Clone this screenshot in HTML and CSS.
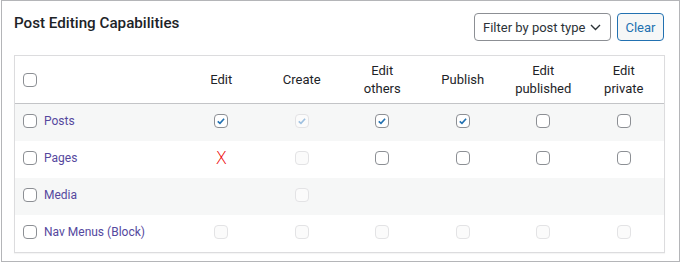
FILE: index.html
```html
<!DOCTYPE html>
<html>
<head>
<meta charset="utf-8">
<link rel="stylesheet" href="styles.css">
</head>
<body>
<div class="frame">
  <div class="topbar">
    <h2 class="title">Post Editing Capabilities</h2>
    <div class="controls">
      <div class="select">
        <span>Filter by post type</span>
        <svg class="chev" width="11" height="7" viewBox="0 0 11 7"><path d="M1 1 L5.5 5.5 L10 1" fill="none" stroke="#2c3338" stroke-width="1.4"/></svg>
      </div>
      <button class="btn">Clear</button>
    </div>
  </div>
  <div class="table">
    <div class="row head">
      <div class="first"><span class="cb"></span></div>
      <div class="cell">Edit</div>
      <div class="cell">Create</div>
      <div class="cell">Edit<br>others</div>
      <div class="cell">Publish</div>
      <div class="cell">Edit<br>published</div>
      <div class="cell">Edit<br>private</div>
    </div>
    <div class="row alt">
      <div class="first"><span class="cb"></span><a class="label">Posts</a></div>
      <div class="cell"><span class="cb on"><svg viewBox="0 0 14 14"><path d="M3.2 7.4 L5.8 9.8 L10.6 4.4" fill="none" stroke-width="1.9"/></svg></span></div>
      <div class="cell"><span class="cb dis on"><svg viewBox="0 0 14 14"><path d="M3.2 7.4 L5.8 9.8 L10.6 4.4" fill="none" stroke-width="1.9"/></svg></span></div>
      <div class="cell"><span class="cb on"><svg viewBox="0 0 14 14"><path d="M3.2 7.4 L5.8 9.8 L10.6 4.4" fill="none" stroke-width="1.9"/></svg></span></div>
      <div class="cell"><span class="cb on"><svg viewBox="0 0 14 14"><path d="M3.2 7.4 L5.8 9.8 L10.6 4.4" fill="none" stroke-width="1.9"/></svg></span></div>
      <div class="cell"><span class="cb"></span></div>
      <div class="cell"><span class="cb"></span></div>
    </div>
    <div class="row">
      <div class="first"><span class="cb"></span><a class="label">Pages</a></div>
      <div class="cell"><span class="no">X</span></div>
      <div class="cell"><span class="cb dis"></span></div>
      <div class="cell"><span class="cb"></span></div>
      <div class="cell"><span class="cb"></span></div>
      <div class="cell"><span class="cb"></span></div>
      <div class="cell"><span class="cb"></span></div>
    </div>
    <div class="row alt">
      <div class="first"><span class="cb"></span><a class="label">Media</a></div>
      <div class="cell"></div>
      <div class="cell"><span class="cb dis"></span></div>
      <div class="cell"></div>
      <div class="cell"></div>
      <div class="cell"></div>
      <div class="cell"></div>
    </div>
    <div class="row">
      <div class="first"><span class="cb"></span><a class="label">Nav Menus (Block)</a></div>
      <div class="cell"><span class="cb dis"></span></div>
      <div class="cell"><span class="cb dis"></span></div>
      <div class="cell"><span class="cb dis"></span></div>
      <div class="cell"><span class="cb dis"></span></div>
      <div class="cell"><span class="cb dis"></span></div>
      <div class="cell"><span class="cb dis"></span></div>
    </div>
  </div>
</div>
</body>
</html>
```
FILE: styles.css
```css
* { box-sizing: border-box; }
html, body { margin: 0; padding: 0; background: #fff; }
body {
  font-family: Roboto, "Liberation Sans", Arial, sans-serif;
  color: #1d2327;
  width: 680px;
  height: 264px;
}
.frame {
  margin-left: 1px;
  width: 679px;
  height: 262px;
  border: 1px solid #b4b5b8;
  padding: 12px 15px 0 11px;
}
.topbar {
  display: flex;
  justify-content: space-between;
  align-items: flex-start;
  height: 42px;
}
.title {
  margin: 0 0 0 1px;
  font-size: 15.2px;
  font-weight: 500;
  color: #1d2327;
  line-height: 20px;
}
.controls {
  display: flex;
  gap: 6px;
}
.select {
  width: 137px;
  height: 28px;
  border: 1px solid #8c8f94;
  border-radius: 4px;
  display: flex;
  align-items: center;
  justify-content: space-between;
  padding: 0 9px 0 8px;
  font-size: 13px;
  color: #2c3338;
  white-space: nowrap;
}
.chev { margin-top: 1px; }
.btn {
  width: 47px;
  height: 28px;
  border: 1px solid #2271b1;
  border-radius: 4px;
  background: #f6f7f7;
  color: #2271b1;
  font-family: inherit;
  font-size: 13px;
  padding: 0;
}
.table {
  border: 1px solid #dcdcde;
  box-shadow: 0 1px 1px rgba(0,0,0,.04);
  margin-left: 1px;
  width: 651px;
}
.row {
  display: grid;
  grid-template-columns: 166px repeat(6, 1fr);
  height: 37px;
  align-items: center;
  padding-bottom: 3px;
}
.row.head {
  height: 48px;
  padding-bottom: 0;
  border-bottom: 1px solid #c3c4c7;
  font-size: 13px;
  line-height: 18px;
}
.row.alt { background: #f6f7f7; }
.first {
  display: flex;
  align-items: center;
  padding-left: 8px;
  gap: 7px;
}
.cell {
  display: flex;
  justify-content: center;
  align-items: center;
  text-align: center;
}
.label {
  font-size: 12px;
  color: #55489e;
}
.cb {
  display: inline-flex;
  width: 14px;
  height: 14px;
  border: 1px solid #8c8f94;
  border-radius: 4px;
  background: #fff;
}
.cb svg { width: 12px; height: 12px; stroke: #2271b1; }
.cb.dis { border-color: #e3e3e5; background: #fbfbfb; }
.cb.dis svg { stroke: #9ec0e0; }
.no {
  color: #ee0000;
  font-size: 17px;
  line-height: 17px;
  font-family: "DejaVu Sans", sans-serif;
  font-weight: 300;
}
```
